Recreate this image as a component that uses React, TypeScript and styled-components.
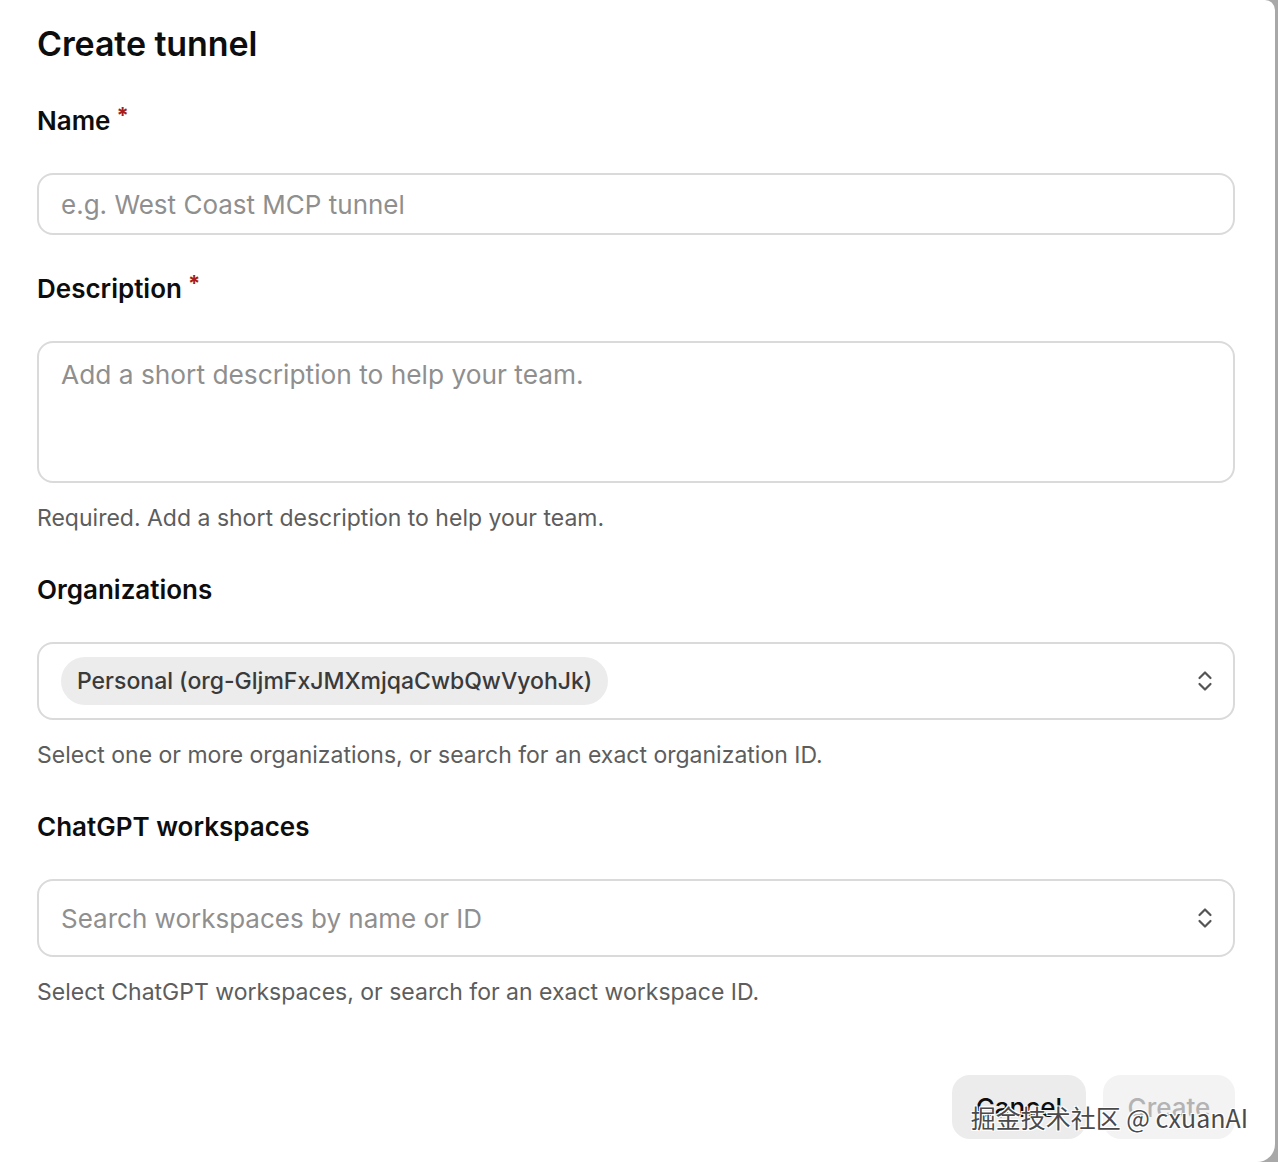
import React from "react";
import styled, { createGlobalStyle } from "styled-components";

const GlobalStyle = createGlobalStyle`
  html, body {
    margin: 0;
    padding: 0;
    background: #a8a8a8;
  }
  body {
    font-family: Inter, "Noto Sans", "Liberation Sans", sans-serif;
    color: #0d0d0d;
    overflow: hidden;
  }
  * {
    box-sizing: border-box;
  }
`;

const Dialog = styled.div`
  position: relative;
  width: 1275px;
  min-height: 1162px;
  background: #ffffff;
  border-radius: 0 10px 18px 0;
  padding: 24px 40px 0 37px;
  display: flex;
  flex-direction: column;
`;

const Title = styled.h1`
  margin: 0 0 41px;
  font-size: 34px;
  line-height: 40px;
  font-weight: 600;
  letter-spacing: -0.1px;
`;

const Field = styled.div`
  display: flex;
  flex-direction: column;
  & + & {
    margin-top: 38px;
  }
`;

const Label = styled.label`
  display: flex;
  align-items: flex-start;
  gap: 6px;
  font-size: 26px;
  line-height: 32px;
  font-weight: 600;
  color: #0d0d0d;
  margin-bottom: 36px;
`;

const Required = styled.span`
  color: #a51d1d;
  font-size: 22px;
  line-height: 20px;
  font-weight: 700;
`;

const TextInput = styled.input`
  height: 62px;
  width: 100%;
  border: 2px solid #dadada;
  border-radius: 16px;
  padding: 0 22px;
  font-family: inherit;
  font-size: 26px;
  color: #0d0d0d;
  outline: none;
  &::placeholder {
    color: #8f8f8f;
  }
`;

const TextArea = styled.textarea`
  height: 142px;
  width: 100%;
  border: 2px solid #dadada;
  border-radius: 16px;
  padding: 14px 22px;
  font-family: inherit;
  font-size: 26.3px;
  line-height: 36px;
  resize: none;
  outline: none;
  &::placeholder {
    color: #8f8f8f;
  }
`;

const Help = styled.p`
  margin: 20px 0 3px;
  font-size: 23px;
  line-height: 30px;
  color: #5d5d5d;
`;

const Select = styled.div`
  height: 78px;
  border: 2px solid #dadada;
  border-radius: 16px;
  padding: 0 20px 0 22px;
  display: flex;
  align-items: center;
  justify-content: space-between;
`;

const Chip = styled.span`
  height: 48px;
  padding: 0 16px;
  border-radius: 24px;
  background: #ececec;
  display: inline-flex;
  align-items: center;
  font-size: 23px;
  font-weight: 500;
  color: #3a3a3a;
`;

const Placeholder = styled.span`
  font-size: 26px;
  color: #8f8f8f;
`;

const Footer = styled.div`
  margin-top: 65px;
  display: flex;
  justify-content: flex-end;
  gap: 17px;
`;

const Button = styled.button<{ $muted?: boolean }>`
  height: 64px;
  padding: 0 24px;
  min-width: 132px;
  border: none;
  border-radius: 18px;
  font-family: inherit;
  font-size: 26px;
  font-weight: 500;
  background: ${(p) => (p.$muted ? "#f3f3f3" : "#ececec")};
  color: ${(p) => (p.$muted ? "#b3b3b3" : "#0d0d0d")};
`;

const Stamp = styled.div`
  position: absolute;
  right: 27px;
  bottom: 29px;
  font-family: "Noto Sans CJK SC", "Liberation Sans", sans-serif;
  font-size: 25px;
  line-height: 32px;
  color: #4a4a4a;
  text-shadow: 1px 1px 0 #fff, -1px -1px 0 #fff, 1px -1px 0 #fff, -1px 1px 0 #fff;
  pointer-events: none;
`;

const UpDown = () => (
  <svg width="16" height="24" viewBox="0 0 16 24" fill="none">
    <path
      d="M2.5 9 L8 3.5 L13.5 9 M2.5 15 L8 20.5 L13.5 15"
      stroke="#555"
      strokeWidth="2.2"
      strokeLinecap="round"
      strokeLinejoin="round"
    />
  </svg>
);

export default function App() {
  return (
    <>
      <GlobalStyle />
      <Dialog>
        <Title>Create tunnel</Title>

        <Field>
          <Label>
            Name<Required>*</Required>
          </Label>
          <TextInput placeholder="e.g. West Coast MCP tunnel" />
        </Field>

        <Field>
          <Label>
            Description<Required>*</Required>
          </Label>
          <TextArea placeholder="Add a short description to help your team." />
          <Help>Required. Add a short description to help your team.</Help>
        </Field>

        <Field>
          <Label>Organizations</Label>
          <Select>
            <Chip>Personal (org-GljmFxJMXmjqaCwbQwVyohJk)</Chip>
            <UpDown />
          </Select>
          <Help>Select one or more organizations, or search for an exact organization ID.</Help>
        </Field>

        <Field>
          <Label>ChatGPT workspaces</Label>
          <Select>
            <Placeholder>Search workspaces by name or ID</Placeholder>
            <UpDown />
          </Select>
          <Help>Select ChatGPT workspaces, or search for an exact workspace ID.</Help>
        </Field>

        <Footer>
          <Button>Cancel</Button>
          <Button $muted disabled>
            Create
          </Button>
        </Footer>

        <Stamp>掘金技术社区 @ cxuanAI</Stamp>
      </Dialog>
    </>
  );
}
